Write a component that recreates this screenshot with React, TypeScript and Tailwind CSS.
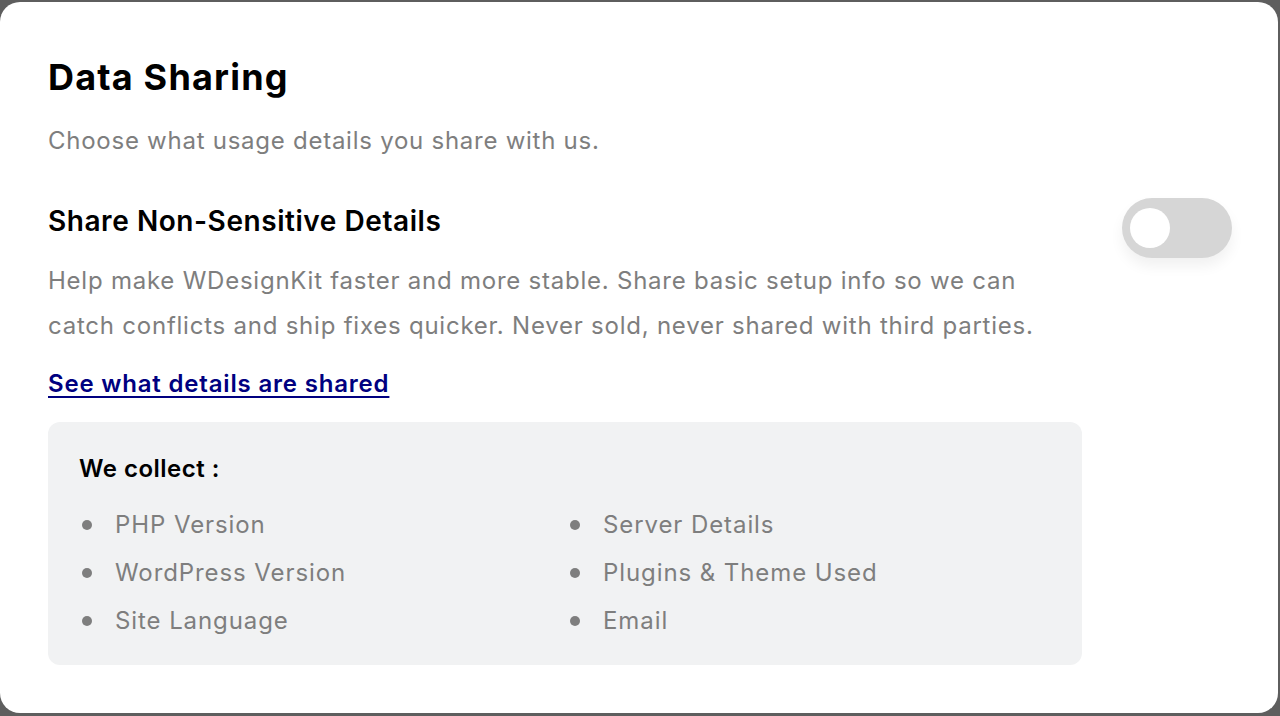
import { useState } from "react";

const collected = [
  "PHP Version",
  "Server Details",
  "WordPress Version",
  "Plugins & Theme Used",
  "Site Language",
  "Email",
];

export default function App() {
  const [enabled, setEnabled] = useState(false);

  return (
    <div className="h-[716px] bg-[#5e5e5e] pt-[2px] pr-[2px] pb-[3px]" style={{ fontFamily: "Inter, 'Noto Sans', sans-serif" }}>
      <div className="h-[711px] bg-white rounded-[20px] pl-[48px] pr-[46px] pt-[53px]">
        <h1 className="text-[36px] leading-[44px] font-bold tracking-[0.033em] text-black">Data Sharing</h1>
        <p className="mt-[26px] text-[24px] leading-[32px] tracking-[0.031em] text-[#7e7e7e]">Choose what usage details you share with us.</p>

        <div className="mt-[41px] flex items-start justify-between">
          <div className="w-[1034px]">
            <h2 className="mt-[5px] text-[28px] leading-[36px] font-semibold tracking-[0.02em] text-black">Share Non-Sensitive Details</h2>
            <p className="mt-[19px] text-[24px] leading-[45px] tracking-[0.032em] text-[#7e7e7e] whitespace-nowrap">
              Help make WDesignKit faster and more stable. Share basic setup info so we can
              <br />
              catch conflicts and ship fixes quicker. Never sold, never shared with third parties.
            </p>
            <a href="#" className="mt-[20px] inline-block text-[24px] leading-[32px] font-semibold tracking-[0.034em] text-[#000080] underline underline-offset-4">
              See what details are shared
            </a>

            <div className="mt-[22px] rounded-[12px] bg-[#f1f2f3] pl-[31px] pt-[31px] pb-[20px]">
              <h3 className="text-[24px] leading-[32px] font-semibold tracking-[0.02em] text-black">We collect :</h3>
              <ul className="mt-[16px] grid grid-cols-[488px_1fr]">
                {collected.map((item) => (
                  <li key={item} className="flex items-center h-[48px] text-[24px] tracking-[0.038em] text-[#7e7e7e]">
                    <span className="w-[36px] pl-[3px] flex items-center">
                      <span className="w-[10px] h-[10px] rounded-full bg-[#7e7e7e]" />
                    </span>
                    {item}
                  </li>
                ))}
              </ul>
            </div>
          </div>

          <button
            onClick={() => setEnabled(!enabled)}
            className={`w-[110px] h-[60px] rounded-full p-[8px] flex items-center shadow-[0_8px_14px_rgba(0,0,0,0.06)] ${enabled ? "bg-[#000080] justify-end" : "bg-[#d6d6d6] justify-start"}`}
          >
            <span className="w-[40px] h-[40px] rounded-full bg-white block" />
          </button>
        </div>
      </div>
    </div>
  );
}
